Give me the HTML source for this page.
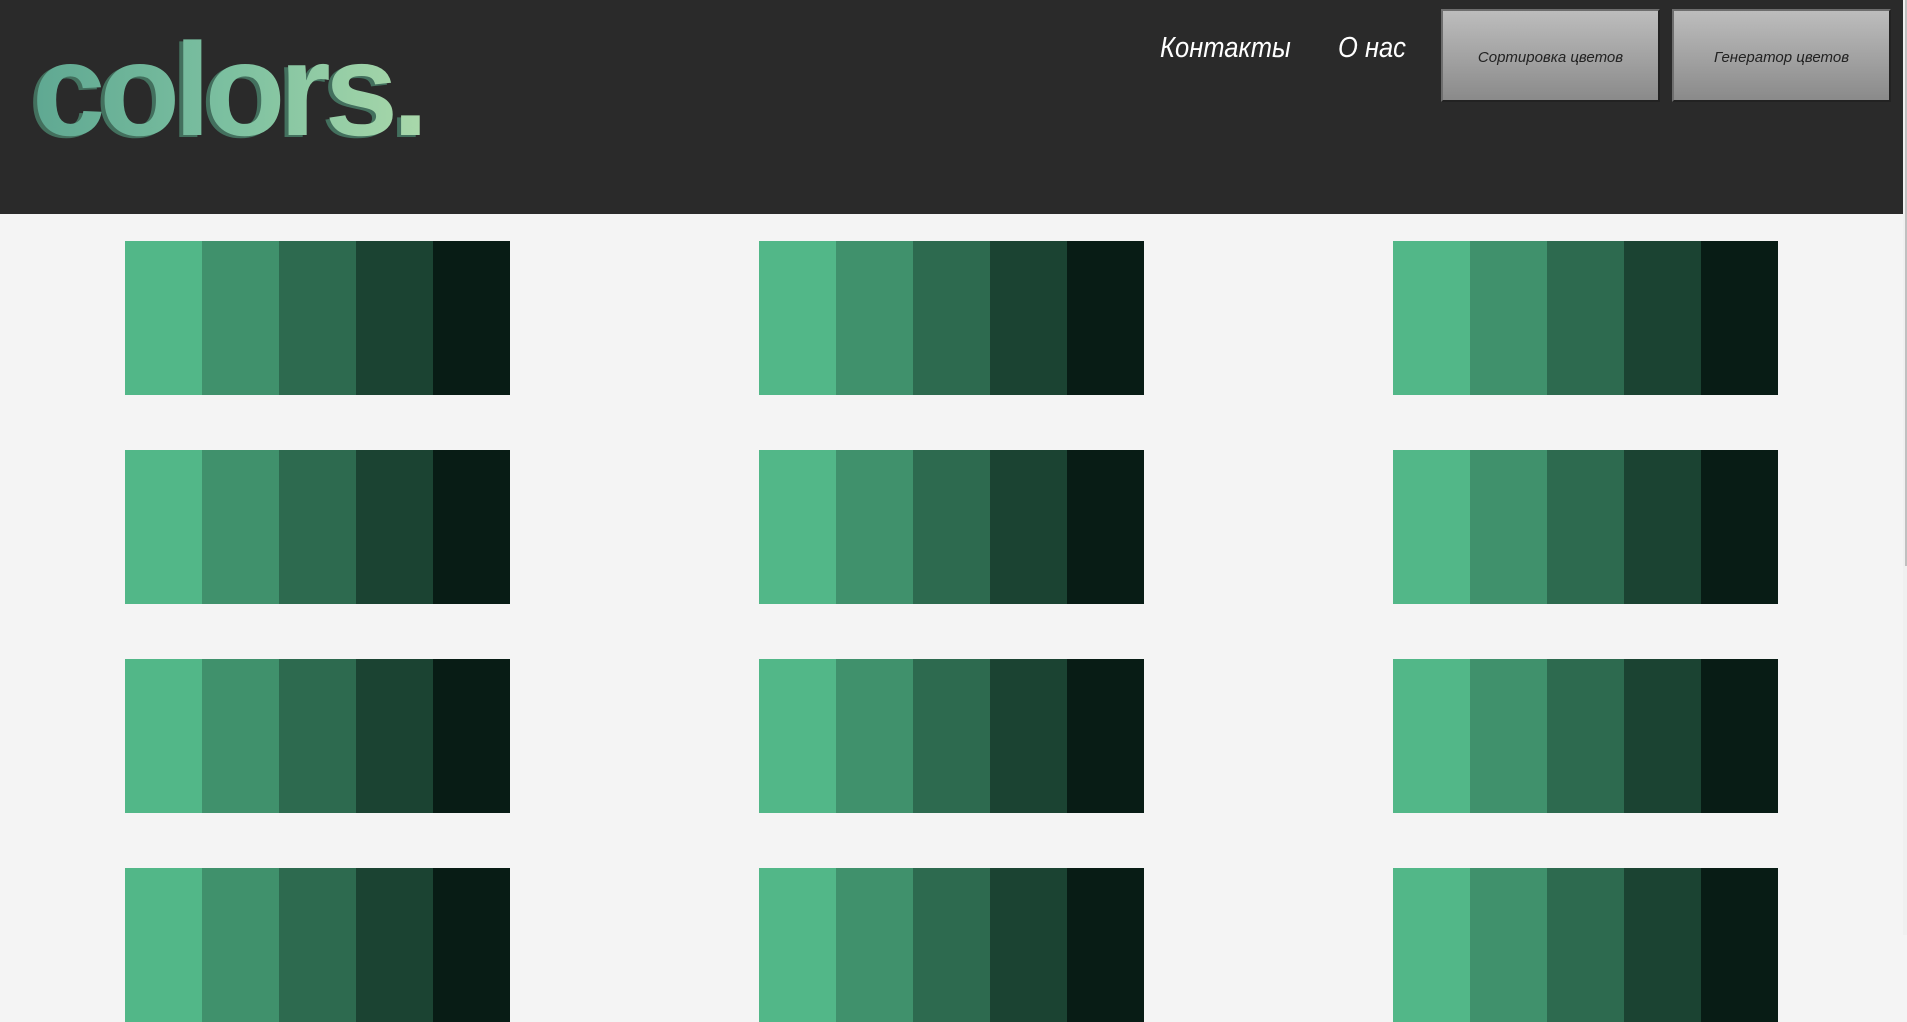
<!DOCTYPE html>
<html><head><meta charset="utf-8"><style>
*{margin:0;padding:0;box-sizing:border-box}
body{width:1907px;height:935px;overflow:hidden;background:#f4f4f4;font-family:"Liberation Sans","DejaVu Sans",sans-serif;position:relative}
header{position:absolute;left:0;top:0;width:1903px;height:214px;background:#2a2a2a}
.logo{position:absolute;left:32px;top:24px;font-size:132px;font-weight:bold;letter-spacing:-6px;line-height:1;
background:linear-gradient(90deg,#5fa892,#7cc0a0 50%,#a9d8aa);-webkit-background-clip:text;background-clip:text;color:transparent;
filter:drop-shadow(-4px 2px 0 rgba(70,120,100,.9));}
.nav{position:absolute;top:32px;font-size:29px;font-style:italic;color:#fff;transform:scaleX(.88);transform-origin:left}
.btn{position:absolute;top:9px;width:219px;height:93px;border:2px solid;border-color:#6e6e6e #222 #222 #6e6e6e;
background:linear-gradient(#bdbdbd,#8a8a8a);font-size:15px;font-style:italic;color:#222;display:flex;align-items:center;justify-content:center;padding-top:4px}
.pal{position:absolute;width:385px;height:154px;display:flex}
.pal div{flex:1}
.sb{position:absolute;left:1903px;top:0;width:4px;height:935px;background:#f0f0f0}
.th{position:absolute;left:1905px;top:0;width:2px;height:566px;background:#c0c0c0}
</style></head><body>
<header>
<div class="logo">colors.</div>
<div class="nav" style="left:1160px">Контакты</div>
<div class="nav" style="left:1338px">О нас</div>
<div class="btn" style="left:1441px">Сортировка цветов</div>
<div class="btn" style="left:1672px">Генератор цветов</div>
</header>
<div id="g"></div>
<script>
var xs=[125,759,1393],ys=[241,450,659,868],c=["#52b788","#40916c","#2d6a4f","#1b4332","#081c15"],h="";
ys.forEach(function(y){xs.forEach(function(x){h+='<div class="pal" style="left:'+x+'px;top:'+y+'px">'+c.map(function(k){return '<div style="background:'+k+'"></div>'}).join('')+'</div>';});});
document.getElementById('g').innerHTML=h;
</script>
<div class="sb"></div><div class="th"></div>
</body></html>
